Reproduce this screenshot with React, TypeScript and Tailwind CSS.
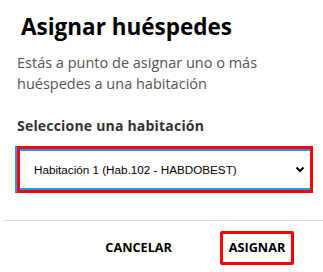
export default function App() {
  return (
    <div className="h-[272px] w-[323px] overflow-hidden bg-white font-['Open_Sans',sans-serif]">
      <div className="px-[17px] pt-[9px]">
        <h2 className="pl-[4px] text-[22.5px] font-bold leading-[36px] text-black">Asignar huéspedes</h2>
        <p className="mt-[7px] text-[14.5px] leading-[21px] text-[#555]">
          Estás a punto de asignar uno o más huéspedes a una habitación
        </p>
        <p className="mt-[22px] text-[14px] font-bold leading-[20px] tracking-[0.2px] text-[#333]">
          Seleccione una habitación
        </p>
        <div className="mt-[10px] flex h-[47px] w-[296px] border-[3px] border-[#ff0000] shadow-[-2px_0_0_#2196f3]">
          <div className="flex flex-1 items-center justify-between border-y-[2px] border-[#2196f3] pl-[14px] pr-[5px]">
            <span className="font-['Liberation_Sans',Arial,sans-serif] text-[11.7px] text-black">
              Habitación 1 (Hab.102 - HABDOBEST)
            </span>
            <svg width="10" height="7" viewBox="0 0 10 7">
              <path d="M1.5 1.5 L5 5 L8.5 1.5" fill="none" stroke="#000" strokeWidth="2" />
            </svg>
          </div>
        </div>
      </div>
      <div className="mt-[27px] ml-[3px] h-px bg-[#e0e0e0]" />
      <div className="flex items-center justify-end pr-[29px] pt-[10px]">
        <button className="mr-[48px] text-[12.7px] font-bold text-black">CANCELAR</button>
        <button className="flex h-[34px] w-[74px] items-center justify-center rounded-[2px] border-[3px] border-[#ff0000] text-[12.7px] font-bold text-black">
          ASIGNAR
        </button>
      </div>
    </div>
  )
}
